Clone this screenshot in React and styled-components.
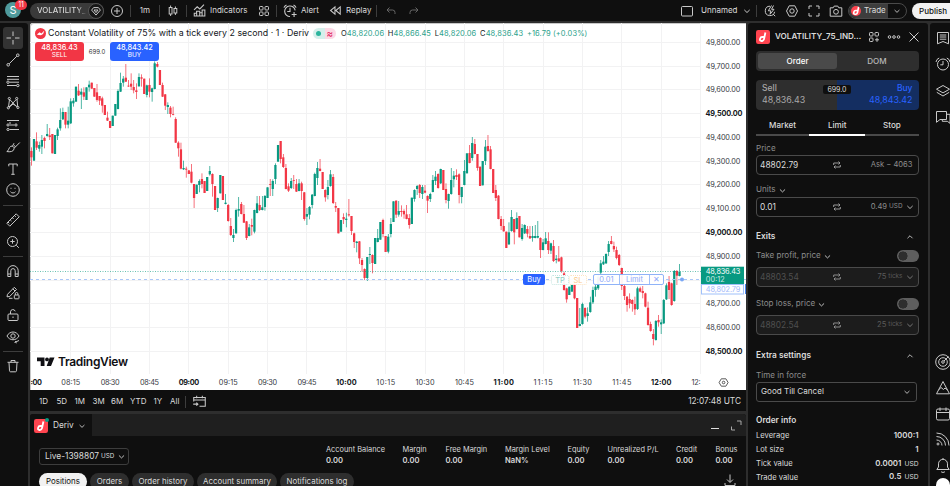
import React from 'react'
import styled, { createGlobalStyle } from 'styled-components'

/* bars are [open, close, high, low] in thirds of a pixel below `top` */
const series = [
  {
    top: 40,
    first: 0,
    bars: [
      [333, 352, 322, 377], [362, 297], [304, 323, 277, 330], [326, 315, 305, 335], [320, 300, 285, 342],
      [294, 303, 290, 325], [288, 282, 252, 290], [286, 291, 264, 300], [282, 340], [342, 285],
      [288, 268, 263, 300], [265, 240, 205, 272], [238, 216, 203, 240], [216, 254, 216, 265], [254, 242, 200, 265],
      [250, 184, 175, 252], [190, 182, 174, 200], [185, 140], [152, 166, 132, 168], [164, 155, 145, 207],
      [157, 170, 142, 180], [180, 142], [142, 134, 122, 155], [128, 146], [144, 170],
      [157, 180, 132, 185], [168, 182, 168, 195], [175, 197, 170, 218], [195, 225], [233, 242, 215, 243],
      [243, 264], [258, 227], [227, 192], [207, 153, 148, 208], [155, 129, 98, 156],
      [128, 116, 108, 140], [113, 125, 72, 126], [137, 139, 120, 141], [131, 140, 100, 150], [141, 151, 120, 160],
      [151, 156, 130, 177], [139, 111, 100, 140], [112, 116, 103, 140], [116, 162], [165, 136, 134, 172],
      [135, 155, 115, 172], [156, 145, 143, 185], [147, 70, 64, 148], [72, 80, 66, 82], [90, 135],
      [135, 170, 128, 171], [163, 197, 162, 210], [201, 195, 187, 222], [203, 222, 198, 232], [222, 224, 200, 226],
      [237, 308, 232, 309], [308, 325, 304, 350], [328, 386, 308, 388], [388, 384, 362, 390], [386, 389, 380, 413],
      [391, 402], [395, 428, 372, 430], [432, 474, 432, 504], [462, 434], [435, 423, 418, 457],
      [417, 432, 400, 445], [423, 459], [453, 411], [403, 393, 378, 407], [402, 432, 400, 470],
      [438, 510], [504, 474, 473, 516], [460, 405], [408, 480], [492, 488, 462, 493],
      [495, 543, 492, 545],
    ],
  },
  {
    top: 120,
    first: 76,
    bars: [
      [318, 345, 294, 348], [354, 345, 327, 366], [340, 270, 266, 341], [272, 267, 231, 290],
      [252, 282, 246, 283], [282, 308, 255, 309], [304, 354, 303, 360], [348, 322, 312, 349], [315, 320, 296, 346],
      [335, 270, 269, 340], [279, 250, 228, 280], [255, 270, 228, 273], [270, 262, 228, 271], [261, 228, 225, 272],
      [234, 202], [192, 194, 177, 228], [207, 183, 178, 228], [177, 135, 130, 192], [125, 75],
      [63, 117, 63, 130], [112, 141, 102, 144], [144, 207, 132, 208], [199, 212, 190, 216], [204, 183, 174, 207],
      [180, 182, 165, 207], [192, 215, 177, 216], [213, 190, 177, 214], [190, 213, 185, 240], [217, 297, 216, 302],
      [290, 282, 264, 315], [284, 261, 258, 298], [255, 224, 222, 265], [228, 162, 158, 229], [174, 144, 126, 195],
      [146, 153, 117, 154], [156, 207], [210, 232, 208, 245], [225, 201, 180, 238], [198, 163, 150, 200],
      [171, 249, 162, 252], [258, 263, 246, 276], [264, 340], [335, 300], [291, 298, 280, 312],
      [300, 296, 278, 322], [283, 286, 237, 290], [288, 333, 288, 345], [340, 366, 338, 384], [369, 365, 363, 397],
      [364, 415, 363, 432], [420, 435, 414, 455], [447, 474, 445, 480], [474, 411, 411, 483], [405, 402, 381, 432],
      [405, 429, 403, 460], [432, 354], [366, 354, 327, 367], [359, 306], [300, 342, 296, 352],
      [348, 396], [395, 350, 342, 400], [342, 312, 294, 352], [306, 244], [242, 284, 241, 294],
      [284, 273, 243, 290], [273, 276, 256, 290], [273, 283, 268, 296], [283, 297, 255, 298], [294, 315, 282, 326],
      [312, 233], [237, 210, 208, 245], [207, 198, 195, 225], [195, 219, 192, 234], [222, 201, 195, 237],
      [212, 218, 195, 220], [228, 242, 226, 279], [237, 222, 218, 246], [216, 180, 165, 217], [183, 170, 153, 195],
      [162, 204, 160, 206], [190, 147, 146, 192], [150, 210], [207, 240, 190, 250], [243, 222, 221, 266],
      [222, 180, 144, 224], [178, 167, 153, 202], [165, 171, 148, 180], [163, 225, 160, 250], [231, 201, 201, 250],
      [195, 153, 120, 196], [160, 100], [99, 129, 75, 130], [114, 69, 51, 122], [72, 102, 57, 103],
      [102, 144, 102, 152], [140, 198], [196, 123], [123, 80, 60, 135], [78, 93, 45, 95],
      [88, 147, 78, 148], [147, 219], [210, 234, 195, 243], [227, 297, 225, 298], [297, 318, 288, 330],
      [318, 334, 297, 335], [335, 384], [373, 337, 307, 375], [333, 291, 270, 335], [297, 337, 297, 373],
      [327, 294, 277, 328], [288, 352], [357, 324, 312, 362], [340, 315, 313, 342], [327, 341, 318, 352],
      [348, 355, 318, 357], [354, 348, 318, 365], [354, 348, 315, 355], [353, 348, 303, 355], [354, 390, 352, 414],
      [390, 367, 357, 391], [372, 355, 336, 373], [363, 390, 337, 402], [392, 370, 368, 402], [378, 423, 360, 426],
      [420, 416, 405, 430], [415, 424, 378, 425], [412, 453, 410, 458], [460, 510, 455, 512], [505, 538, 503, 548],
      [525, 500], [515, 492], [492, 535, 490, 538], [534, 624], [618, 612, 564, 619],
      [612, 552, 548, 614], [564, 590, 562, 595], [588, 580, 562, 605], [576, 547, 530, 578], [547, 510, 500, 552],
      [510, 500, 490, 530], [505, 470, 462, 510], [458, 430, 420, 462], [433, 425, 408, 435], [430, 402, 400, 432],
      [396, 372, 363, 408], [363, 372, 348, 373], [378, 388, 365, 396], [390, 414, 380, 418], [405, 435, 402, 438],
      [444, 498, 443, 510], [498, 528, 495, 540], [530, 555, 528, 575], [537, 550, 520, 565], [540, 552, 538, 575],
      [552, 568, 530, 585], [567, 505, 500, 570], [505, 515, 500, 517], [513, 519, 498, 535], [520, 560, 518, 562],
      [563, 615, 545, 617], [612, 633, 605, 635], [642, 657, 627, 676], [660, 603, 600, 662], [600, 607, 585, 620],
      [613, 607, 598, 642], [610, 540, 537, 612], [538, 496, 490, 540], [486, 510, 468, 537], [490, 555, 488, 557],
      [543, 453, 450, 545], [453, 467, 450, 495], [468, 456, 432, 469],
    ],
  },
]

const prices = Array.from({ length: 14 }, (_, i) => 49800 - i * 100)
const times = [
  '08:15', '08:30', '08:45', '09:00', '09:15', '09:30', '09:45', '10:00', '10:15',
  '10:30', '10:45', '11:00', '11:15', '11:30', '11:45', '12:00',
]
const isMajor = (t) => t.endsWith(':00')
const format = (n) => `${n.toLocaleString('en-US')}.00`

/* every icon sits on a 20 by 20 canvas */
const shapes = {
  plus: <><circle cx='10' cy='10' r='5.5' /><path d='M7 10h6M10 7v6' /></>,
  diamond: <><path d='M7.6 6.6h4.8l2 2.5-4.4 5-4.4-5z' /><path d='M8 9l2 2.6L12 9z' /></>,
  candles: <><path d='M7.6 4.5v2M7.6 13v2M12.4 5.5v2M12.4 12v2' /><rect x='6.2' y='6.5' width='2.8' height='6.5' /><rect x='11' y='7.5' width='2.8' height='4.5' /></>,
  indicators: <><path d='M5 15.3v-2.6h2.2v-2h3v1.4h2.3V9.500h2.600v5.800zM7.300 15v-3M10.200 15v-4M12.500 15v-3' /><path d='M4.800 9.500l3-3 2.500 2 4-4' /></>,
  grid: <><rect x='5.500' y='5.500' width='3.500' height='3.500' rx='.8' /><rect x='11' y='5.500' width='3.500' height='3.500' rx='.8' /><rect x='5.500' y='11' width='3.500' height='3.500' rx='.8' /><rect x='11' y='11' width='3.500' height='3.500' rx='.8' /></>,
  addGrid: <><rect x='5.500' y='5.500' width='3.500' height='3.500' rx='.8' /><rect x='11' y='5.500' width='3.500' height='3.500' rx='.8' /><rect x='5.500' y='11' width='3.500' height='3.500' rx='.8' /><path d='M11 12.800h4M13 10.800v4' /></>,
  alert: <><path d='M14.700 9.500A4.800 4.800 0 1 0 10 15M10 7v3.500h-2.500M4.500 7a4 4 0 0 1 2.300-2.500M15.500 7a4 4 0 0 0-2.300-2.500M11.500 13.200h4.500M13.700 11v4.500' /></>,
  replay: <path d='M9.500 6.500L5.300 10l4.200 3.500zM14.500 6.500L10.300 10l4.200 3.500z' />,
  undo: <path d='M8.500 6.500L6 9l2.500 2.500M6 9h5.500a2.500 2.500 0 0 1 2.500 2.500V13' />,
  redo: <path d='M11.500 6.500L14 9l-2.500 2.500M14 9H8.500A2.500 2.500 0 0 0 6 11.500V13' />,
  square: <rect x='4.500' y='5.500' width='11' height='9.500' rx='1' />,
  chevron: <path d='M7.300 8.900l2.700 2.600 2.700-2.600' />,
  up: <path d='M7.200 11.400L10 8.600l2.800 2.800' />,
  quick: <><path d='M13.200 13.200l2 2M10 5.200a4.700 4.700 0 1 0 4.600 5.600' /><path d='M11.500 4.500L8.300 9.800h2.500l-.8 3.500 4-5h-2.500l2-3.800' /></>,
  settings: <><path d='M7.200 4.800h5.600L15.500 10l-2.700 5.200H7.200L4.500 10z' /><circle cx='10' cy='10' r='2.200' /></>,
  full: <path d='M5 8V5h3M12 5h3v3M15 12v3h-3M8 15H5v-3' />,
  camera: <><path d='M4.200 6.800h3l1-1.700h3.600l1 1.700h3v8.400H4.200z' /><circle cx='10' cy='10.800' r='2.400' /></>,
  cross: <path d='M10 3.500V8M10 12v4.500M3.500 10H8M12 10h4.500' />,
  line: <><circle cx='5.200' cy='14.800' r='1.300' /><circle cx='14.800' cy='5.200' r='1.300' /><path d='M6.200 13.800l7.600-7.600' /></>,
  fib: <><path d='M4 5.500h12M4 8.300h12M6.500 11.200H16M4 14.500h9.500' /><circle cx='5' cy='11.200' r='1.200' /><circle cx='14.800' cy='14.500' r='1.200' /></>,
  pattern: <><path d='M5.500 14l1-7.500M6.700 6.500l6.600 6.700M6 14l7.300-7.500M14 6.500l.700 7M6 14.500l4-3.500 4.500 3' /><circle cx='6.300' cy='5.500' r='1.100' /><circle cx='13.700' cy='5.500' r='1.100' /><circle cx='5.300' cy='14.800' r='1.100' /><circle cx='14.900' cy='14.500' r='1.100' /></>,
  forecast: <><path d='M4 5.500h12M6.500 14.500H16M6.500 10h5M7 7v2' /><circle cx='5' cy='10' r='1.100' /><circle cx='13' cy='10' r='1.100' /><circle cx='5' cy='14.500' r='1.100' /></>,
  brush: <path d='M3.800 14.500c2-.3 1.700-4 4-5.200 1.800-.8 3.600.7 3.300 2.600-.5 2.800-4.300 3.300-7.300 2.600zM9.500 9.200l1.500-3M11.300 11l5.500-5.500M11 8.500l1.500 1' />,
  text: <path d='M5.800 7.300V5h8.400v2.300M10 5v10.300M8.300 15.300h3.400' />,
  smile: <><circle cx='10' cy='10' r='6.300' /><path d='M7.500 11.700c1 1.700 4 1.700 5 0M8 7.800v1M12 7.800v1' /></>,
  ruler: <path d='M3.800 13.200l9.400-9.400 3 3-9.400 9.400zM11.500 5.500l1.300 1.300M9.300 7.700l1.300 1.300M7.200 9.800l1.300 1.300M5 12l1.300 1.300' />,
  zoom: <><circle cx='9.500' cy='9.500' r='5' /><path d='M13.300 13.300l2.500 2.500M7.300 9.500h4.400M9.500 7.300v4.400' /></>,
  magnet: <path d='M4.800 15.500V9.800a5.200 5.200 0 0 1 10.400 0v5.700h-3V9.800a2.200 2.200 0 0 0-4.400 0v5.700zM4.800 13h3M12.200 13h3' />,
  pencilLock: <><path d='M4 13.800l.5-2.500 6.800-7 2.200 2.200-6.800 7zM9.800 5.800l2.200 2.200' /><rect x='11.300' y='12' width='4.700' height='3.800' rx='.6' /><path d='M12.300 12v-1.200a1.300 1.300 0 0 1 2.600 0V12M6 15.300h3.500' /></>,
  unlock: <><rect x='5' y='9' width='10' height='6.500' rx='1' /><path d='M7.500 9V6.800a2.400 2.400 0 0 1 4.700-.5M10 11.500v1.500' /></>,
  eye: <><path d='M4 9c2.700-5.300 9.300-5.300 12 0-2.700 5-9.300 5-12 0z' /><circle cx='10' cy='9' r='2.200' /><path d='M11.500 15.500l4.500-2M12.500 14l.8 2.300' /></>,
  trash: <path d='M4.500 6.300h11M8 6.300V4.500h4v1.800M6 6.500l.5 8.300c0 .5.500 1 1 1h5c.5 0 1-.5 1-1l.5-8.300' />,
  calendar: <><path d='M4.500 10V6.200h11v8.300H10M4.500 8.500h11M7.300 4.500V7M12.700 4.500V7M4 12.500h4.500M7 11l1.500 1.500L7 14' /></>,
  swap: <path d='M6.700 10V8h6M11.500 6.500L13 8l-1.500 1.500M13.300 10v2h-6M8.500 10.500L7 12l1.500 1.500' />,
  dots: <><circle cx='5.500' cy='10' r='1.300' /><circle cx='10' cy='10' r='1.300' /><circle cx='14.500' cy='10' r='1.300' /></>,
  close: <path d='M5.500 5.500l9 9M14.500 5.500l-9 9' />,
  minimize: <path d='M6 13.500h8' />,
  expand: <path d='M11 6h4v4M9 15H5.500v-3.500' />,
  download: <path d='M10 4.500v7.500M7 9.500l3 3 3-3M5 13v2.500h10V13' />,
  news: <path d='M4.500 4.500h11v11.300L10 13.500l-5.500 2.300zM6.800 7h6.500M6.800 9h6.500M6.800 11.200h6.500' />,
  clock: <><circle cx='10' cy='10.500' r='5.500' /><path d='M10 7v3.800H7.300M3 8a5 5 0 0 1 3.200-4M17 8a5 5 0 0 0-3.200-4' /></>,
  layers: <path d='M10 4.500l6.500 3.700-6.500 3.700-6.500-3.700zM3.800 11.300L10 15l6.200-3.700' />,
  chat: <path d='M3.500 4.500h10v8H7l-3.500 2.800zM14 7.300h3v9l-2.700-2H9.300v-1.800' />,
  radar: <><circle cx='10' cy='10' r='7.300' /><circle cx='10' cy='10' r='4.300' /><circle cx='10' cy='10' r='1.300' /><path d='M11 9l4.500-4.500' /></>,
  mountain: <path d='M3.500 15.800L10 3.500l6.500 12.300zM5.800 11.700L8 9.500l2.500 2 1.500-1.500 2.500 2' />,
  date: <><rect x='3.500' y='5' width='13' height='11' rx='1.500' /><path d='M3.500 8.500h13M7 3.500V7M13 3.500V7' /></>,
  feed: <><path d='M3.500 4a12.500 12.500 0 0 1 12.500 12.500M3.500 7.500a9 9 0 0 1 9 9M3.500 11a5.500 5.500 0 0 1 5.500 5.500' /><circle cx='5' cy='15' r='1' /></>,
  bell: <path d='M3.800 14.500h12.400l-1.700-2.500V8.800a4.500 4.500 0 0 0-9 0V12zM8 16.500c.7 1.200 3.300 1.200 4 0M10 3v1.300' />,
}

const Icon = ({ name, size = 20, color = '#c9c9c9' }) => (
  <Glyph viewBox='0 0 20 20' width={size} height={size} $color={color}>
    {shapes[name]}
  </Glyph>
)

const DerivLogo = ({ size }) => (
  <Logo viewBox='0 0 14 14' width={size} height={size}>
    <rect width='14' height='14' rx='2.200' fill='#ff444f' />
    <path d='M9.400 2.500L8 9.200a2.200 2.200 0 0 1-2.100 1.800h-.6c-1 0-1.500-.7-1.300-1.600l.2-.9A2 2 0 0 1 6.200 7h1.900' fill='none' stroke='#fff' strokeWidth='1.800' />
  </Logo>
)

const Chart = () => (
  <ChartCanvas viewBox='30 23 716 367' width='716' height='367'>
    <g fill='#f2f2f3'>
      {prices.map((p, i) => (
        <rect key={p} x='30' y={Math.round(41.800 + i * 23.770)} width='671' height='1' />
      ))}
      {Array.from({ length: 17 }, (_, i) => (
        <rect key={i} x={Math.round(70.300 + i * 39.360)} y='23' width='1' height='351' />
      ))}
    </g>
    {series.map(({ top, first, bars }) =>
      bars.map(([open, close, high = Math.min(open, close), low = Math.max(open, close)], i) => {
        const x = 31.400 + (first + i) * 2.624
        const up = close < open
        const color = up ? '#089981' : '#f23645'
        return (
          <g key={first + i} fill={color}>
            <rect x={x - 0.35} y={top + high / 3} width='0.700' height={(low - high) / 3} />
            <rect
              x={x - 1.15}
              y={top + Math.min(open, close) / 3}
              width='2.250'
              height={Math.max(Math.abs(open - close) / 3, 0.8)}
            />
          </g>
        )
      })
    )}
    <path d='M30 271.500h671' stroke='#089981' strokeOpacity='.6' strokeDasharray='1 1.500' />
    <path d='M30 279.500h716' stroke='#a9c6f7' strokeDasharray='3 3' />
    <circle cx='682' cy='279.500' r='2' fill='#7aa7f5' />
    {prices.map((p, i) => {
      const major = p % 500 === 0
      return p === 48800 ? null : (
        <AxisText key={p} x={major ? 705.500 : 705.800} y={44.800 + i * 23.770} textLength={major ? 37 : 34.500} $major={major}>
          {format(p)}
        </AxisText>
      )
    })}
    <AxisText x='30.500' y='385' textLength='11.500' $major>:00</AxisText>
    {times.map((t, i) => (
      <AxisText key={t} x={70.800 + i * 39.360} y='385' textLength={isMajor(t) ? 20.500 : 19} textAnchor='middle' $major={isMajor(t)}>
        {t}
      </AxisText>
    ))}
    <AxisText x='691.500' y='385' textLength='9'>12:</AxisText>
    <g fill='none' stroke='#333' strokeWidth='.8'>
      <path d='M721.300 378.800h4.600l2.200 3.700-2.200 3.700h-4.600l-2.200-3.700z' />
      <circle cx='723.600' cy='382.500' r='1.300' />
    </g>
    <rect x='701' y='266.700' width='43' height='17.300' fill='#089981' />
    <AxisText x='705.800' y='274' textLength='34.500' $color='#fff'>48,836.43</AxisText>
    <AxisText x='705.800' y='282.300' textLength='19' $color='#c9e9e3'>00:12</AxisText>
    <rect x='701.500' y='284.500' width='42' height='9.500' fill='#fff' stroke='#9fc0fa' />
    <rect x='745' y='284' width='1' height='10' fill='#4b86ee' />
    <AxisText x='705.800' y='292.200' textLength='34.500' $color='#9fb8fa'>48,802.79</AxisText>
    <g fill='#101014'>
      <path d='M37 357.500h7.500v8.500h-3.800v-4.700H37zM49.700 357.500h4.800L51 366h-4.300z' />
      <circle cx='47' cy='359.400' r='1.900' />
      <Wordmark x='58' y='366.300' textLength='70'>TradingView</Wordmark>
    </g>
  </ChartCanvas>
)

const ranges = [['1D', 17.5], ['5D', 18], ['1M', 18], ['3M', 18.500], ['6M', 19], ['YTD', 23.500], ['1Y', 16.500], ['All', 15]]
const leftTools = ['line', 'fib', 'pattern', 'forecast', 'brush', 'text', 'smile']
const balances = [
  ['Account Balance', '0.00', 76.500], ['Margin', '0.00', 43], ['Free Margin', '0.00', 59.500], ['Margin Level', 'NaN%', 62.500],
  ['Equity', '0.00', 40], ['Unrealized P/L', '0.00', 68.500], ['Credit', '0.00', 39.500], ['Bonus', '0.00', 30],
]
const orderInfo = [['Leverage', '1000:1'], ['Lot size', '1'], ['Tick value', '0.0001', 'USD'], ['Trade value', '0.5', 'USD']]

const TopBar = () => (
  <TopWrapper>
    <Slot $w={30}>
      <Avatar>
        S<Badge>11</Badge>
      </Avatar>
    </Slot>
    <SymbolPill>
      <span>VOLATILITY_</span>
      <SymbolEnd><Icon name='diamond' /></SymbolEnd>
    </SymbolPill>
    <Slot $w={26}><Icon name='plus' /></Slot>
    <Divider />
    <Slot $w={28}>1m</Slot>
    <Divider />
    <Slot $w={26}><Icon name='candles' /></Slot>
    <Divider />
    <Slot $w={64} $start><Icon name='indicators' size={21} />Indicators</Slot>
    <Slot $w={25}><Icon name='grid' /></Slot>
    <Divider />
    <Slot $w={46} $start><Icon name='alert' size={22} />Alert</Slot>
    <Slot $w={53} $start><Icon name='replay' size={21} />Replay</Slot>
    <Divider />
    <Slot $w={28}><Icon name='undo' color='#666' /></Slot>
    <Slot $w={18}><Icon name='redo' color='#666' /></Slot>
    <Spacer />
    <Slot $w={24}><Icon name='square' /></Slot>
    <Slot $w={39} $text>Unnamed</Slot>
    <Slot $w={18}><Icon name='chevron' /></Slot>
    <Divider />
    <Slot $w={26}><Icon name='quick' /></Slot>
    <Slot $w={18}><Icon name='settings' /></Slot>
    <Slot $w={26}><Icon name='full' size={20} /></Slot>
    <Slot $w={17}><Icon name='camera' /></Slot>
    <TradePill>
      <TradeMain>
        <RoundLogo><DerivLogo size={13} /></RoundLogo>
        Trade
      </TradeMain>
      <Icon name='chevron' size={18} />
    </TradePill>
    <Publish>Publish</Publish>
  </TopWrapper>
)

const Field = ({ value, hint, unit, chevron, dim }) => (
  <Input $dim={dim}>
    <b>{value}</b>
    <Icon name='swap' color={dim ? '#8c8c8c' : '#9a9a9a'} />
    <Hint $chevron={chevron} $dim={dim}>
      {hint}{unit && <small>{unit}</small>}
      {chevron && <Icon name='chevron' color={dim ? '#777' : '#b0b0b0'} />}
    </Hint>
  </Input>
)

const OrderPanel = () => (
  <Panel>
    <PanelHead>
      <DerivLogo size={14} />
      <h2>VOLATILITY_75_IND…</h2>
      <Icon name='addGrid' />
      <Icon name='dots' />
      <Icon name='close' />
    </PanelHead>
    <Segments>
      <Segment $active>Order</Segment>
      <Segment>DOM</Segment>
    </Segments>
    <Quotes>
      <Quote>Sell<b>48,836.43</b></Quote>
      <Quote $buy>Buy<b>48,843.42</b></Quote>
      <Spread>699.0</Spread>
    </Quotes>
    <OrderTypes>
      <OrderType $w={53}>Market</OrderType>
      <OrderType $w={56} $active>Limit</OrderType>
      <OrderType $w={53}>Stop</OrderType>
    </OrderTypes>
    <Label $h={19} $pt={6}>Price</Label>
    <Field value='48802.79' hint='Ask − 4063' />
    <Label $h={22} $pt={8}>Units<Icon name='chevron' size={19} /></Label>
    <Field value='0.01' hint='0.49' unit='USD' chevron />
    <Heading $h={30} $pt={10}>Exits<Icon name='up' size={18} /></Heading>
    <Label $h={20} $pb={2}>Take profit, price<Icon name='chevron' size={19} /><Switch /></Label>
    <Field value='48803.54' hint='75' unit='ticks' chevron dim />
    <Label $h={28} $pt={8} $pb={2}>Stop loss, price<Icon name='chevron' size={19} /><Switch /></Label>
    <Field value='48802.54' hint='25' unit='ticks' chevron dim />
    <Heading $h={31} $pt={11}>Extra settings<Icon name='up' size={18} /></Heading>
    <Label $h={16} $pt={3}>Time in force</Label>
    <Select>Good Till Cancel<Icon name='chevron' size={18} /></Select>
    <Heading $h={27} $pt={11}>Order info</Heading>
    {orderInfo.map(([name, value, unit]) => (
      <InfoRow key={name}>
        {name}
        <b>{value}{unit && <small>{unit}</small>}</b>
      </InfoRow>
    ))}
  </Panel>
)

const App = () => (
  <>
    <GlobalStyle />
    <Page>
      <TopBar />
      <Body>
        <LeftBar>
          <Tool $active><Icon name='cross' /></Tool>
          {leftTools.map((name) => <Tool key={name}><Icon name={name} /></Tool>)}
          <Rule />
          <Tool><Icon name='ruler' /></Tool>
          <Tool><Icon name='zoom' /></Tool>
          <Rule />
          {['magnet', 'pencilLock', 'unlock', 'eye'].map((name) => <Tool key={name}><Icon name={name} /></Tool>)}
          <Rule />
          <Tool><Icon name='trash' /></Tool>
        </LeftBar>
        <Center>
          <ChartArea>
            <Chart />
            <Legend>
              <LegendLogo viewBox='0 0 12 12' width='11' height='11'>
                <circle cx='6' cy='6' r='6' fill='#f23645' />
                <path d='M2 7l3-2.500L7 6l3.300-3.200L8.800 6.500 6.500 8 4 7.500z' fill='#fff' />
              </LegendLogo>
              <Title>Constant Volatility of 75% with a tick every 2 second · 1 · Deriv</Title>
              <Status><i />≈</Status>
              <Ohlc>
                <span>O<b>48,820.06</b></span>
                <span>H<b>48,866.45</b></span>
                <span>L<b>48,820.06</b></span>
                <span>C<b>48,836.43</b></span>
                <b>+16.79 (+0.03%)</b>
              </Ohlc>
            </Legend>
            <QuickTrade>
              <QuickButton>48,836.43<span>SELL</span></QuickButton>
              <em>699.0</em>
              <QuickButton $buy>48,843.42<span>BUY</span></QuickButton>
            </QuickTrade>
            <OrderLine>
              <BuyTag>Buy</BuyTag>
              <StopTag>TP</StopTag>
              <StopTag $orange>SL</StopTag>
              <LimitTag>
                <span>0.01</span>
                <span>Limit</span>
                <span>✕</span>
              </LimitTag>
            </OrderLine>
          </ChartArea>
          <RangeBar>
            {ranges.map(([name, w]) => <Range key={name} $w={w}>{name}</Range>)}
            <Divider />
            <Slot $w={26}><Icon name='calendar' size={21} /></Slot>
            <Clock>12:07:48 UTC</Clock>
          </RangeBar>
          <Bottom>
            <BottomHead>
              <BrokerTab>
                <BrokerLogo><DerivLogo size={14} /></BrokerLogo>
                Deriv
                <Icon name='chevron' size={18} />
              </BrokerTab>
              <Spacer />
              <Slot $w={21}><Icon name='minimize' color='#ddd' /></Slot>
              <Slot $w={21}><Icon name='expand' color='#aaa' /></Slot>
            </BottomHead>
            <Summary>
              <Account>Live-1398807 <small>USD</small><Icon name='chevron' size={19} /></Account>
              {balances.map(([name, value, w]) => (
                <Balance key={name} $w={w}>{name}<b>{value}</b></Balance>
              ))}
            </Summary>
            <Pills>
              <Pill $w={48} $active>Positions</Pill>
              <Pill $w={39}>Orders</Pill>
              <Pill $w={62}>Order history</Pill>
              <Pill $w={80}>Account summary</Pill>
              <Pill $w={74}>Notifications log</Pill>
              <Spacer />
              <DownloadSlot $w={33}><Icon name='download' /></DownloadSlot>
            </Pills>
          </Bottom>
        </Center>
        <OrderPanel />
        <RightBar>
          {['news', 'clock', 'layers', 'chat'].map((name) => <SideTool key={name} $h={26.500}><Icon name={name} /></SideTool>)}
          <Spacer />
          {['radar', 'mountain', 'date', 'feed', 'bell'].map((name) => <SideTool key={name} $h={25.700}><Icon name={name} /></SideTool>)}
          <Help />
        </RightBar>
      </Body>
    </Page>
  </>
)

const GlobalStyle = createGlobalStyle`
  * {
    box-sizing: border-box;
  }
  body {
    margin: 0;
    overflow: hidden;
    background: #2e2e2e;
    color: #dbdbdb;
    font-family: Inter, "Liberation Sans", sans-serif;
    font-size: 8.3px;
    line-height: 1.2;
  }
`
const Glyph = styled.svg`
  flex: none;
  fill: none;
  stroke: ${({ $color }) => $color};
  stroke-width: 1;
`
const Logo = styled.svg`
  flex: none;
`
const Page = styled.div`
  display: flex;
  flex-direction: column;
  gap: 2px;
  width: 950px;
  height: 486px;
  overflow: hidden;
`
const Spacer = styled.div`
  flex: 1;
`
const TopWrapper = styled.header`
  display: flex;
  align-items: center;
  height: 21px;
  flex: none;
  background: #0f0f0f;
  font-size: 8px;
`
const Slot = styled.div`
  display: flex;
  flex: none;
  align-items: center;
  justify-content: ${({ $start, $text }) => ($start || $text ? 'flex-start' : 'center')};
  width: ${({ $w }) => $w}px;
  padding-left: ${({ $start, $text }) => ($start || $text ? 2 : 0)}px;
  white-space: nowrap;
`
const DownloadSlot = styled(Slot)`
  margin-top: -4px;
`
const Divider = styled.div`
  flex: none;
  width: 1px;
  height: 12px;
  background: #3d3d3d;
`
const Avatar = styled.div`
  position: relative;
  width: 16px;
  height: 16px;
  margin: -1px 4px 0 0;
  border-radius: 50%;
  background: #4f9a9c;
  color: #fff;
  font-size: 11px;
  line-height: 16px;
  text-align: center;
`
const Badge = styled.span`
  position: absolute;
  left: 10px;
  top: -2px;
  width: 12px;
  height: 10px;
  border-radius: 5px;
  background: #f23645;
  font-size: 7px;
  line-height: 10px;
`
const SymbolPill = styled.div`
  display: flex;
  align-items: center;
  justify-content: space-between;
  flex: none;
  width: 74px;
  height: 16px;
  padding-left: 7px;
  border-radius: 8px;
  background: #3a3a3a;
  font-size: 7.8px;
  font-weight: 500;
  span {
    width: 50px;
    background: linear-gradient(90deg, #e0e0e0 80%, #3a3a3a);
    background-clip: text;
    color: transparent;
  }
`
const SymbolEnd = styled.div`
  display: flex;
  align-items: center;
  justify-content: center;
  flex: none;
  width: 16px;
  height: 16px;
  border: 1px solid #555;
  border-radius: 8px;
  background: #171717;
`
const TradePill = styled.div`
  display: flex;
  align-items: center;
  flex: none;
  width: 59px;
  height: 16px;
  margin-left: 4px;
  overflow: hidden;
  border: 1px solid #4a4a4a;
  border-radius: 8px;
`
const TradeMain = styled.div`
  display: flex;
  align-items: center;
  width: 41px;
  height: 16px;
  padding-left: 2px;
  gap: 3px;
  background: #3d3d3d;
`
const RoundLogo = styled.div`
  display: flex;
  align-items: center;
  justify-content: center;
  flex: none;
  width: 10px;
  height: 10px;
  overflow: hidden;
  border-radius: 50%;
`
const Publish = styled.button`
  flex: none;
  width: 48px;
  height: 16px;
  margin: 0 -10px 0 5px;
  padding: 0 0 0 7px;
  border: 0;
  border-radius: 8px;
  background: #f2f2f2;
  color: #0f0f0f;
  font: 500 8px Inter, sans-serif;
  text-align: left;
`
const Body = styled.div`
  display: flex;
  flex: 1;
  gap: 2px;
  min-height: 0;
`
const LeftBar = styled.nav`
  display: flex;
  flex-direction: column;
  align-items: center;
  flex: none;
  width: 28px;
  padding: 4px 2px 0 0;
  border-radius: 0 3px 0 0;
  background: #0f0f0f;
`
const Tool = styled.div`
  display: flex;
  flex: none;
  align-items: center;
  justify-content: center;
  width: 20px;
  height: 21.8px;
  border-radius: 3px;
  background: ${({ $active }) => ($active ? '#333' : 'none')};
  background-clip: content-box;
`
const Rule = styled.div`
  flex: none;
  width: 20px;
  height: 1px;
  margin: 3.4px 0;
  background: #3d3d3d;
`
const Center = styled.main`
  display: flex;
  flex: none;
  flex-direction: column;
  width: 716px;
`
const ChartArea = styled.section`
  position: relative;
  flex: none;
  height: 367px;
  overflow: hidden;
  border-radius: 3px 0 0 0;
  background: #fff;
  box-shadow: inset 1px 1px #c8c8c8;
`
const ChartCanvas = styled.svg`
  display: block;
`
const AxisText = styled.text`
  fill: ${({ $color, $major }) => $color || ($major ? '#131722' : '#363942')};
  font-size: 7.3px;
  font-weight: ${({ $major }) => ($major ? 700 : 400)};
`
const Wordmark = styled.text`
  font-size: 12px;
  font-weight: 600;
`
const Legend = styled.div`
  position: absolute;
  left: 5px;
  top: 3px;
  display: flex;
  align-items: center;
  height: 14px;
  white-space: nowrap;
  color: #131722;
`
const LegendLogo = styled(Logo)`
  margin-right: 2px;
`
const Title = styled.span`
  width: 265px;
  font-size: 8.8px;
  letter-spacing: .025px;
`
const Status = styled.span`
  display: flex;
  align-items: center;
  justify-content: space-around;
  width: 23px;
  height: 11px;
  margin-right: 5px;
  border-radius: 6px;
  background: linear-gradient(90deg, #d5efeb 50%, #fcd9e5 50%);
  color: #e0245e;
  font-size: 10px;
  line-height: 10px;
  i {
    width: 5px;
    height: 5px;
    border-radius: 50%;
    background: #2bb49d;
  }
`
const Ohlc = styled.span`
  display: flex;
  gap: 3.7px;
  font-size: 7.5px;
  letter-spacing: .1px;
  b {
    color: #2a9f8b;
    font-weight: 400;
  }
`
const QuickTrade = styled.div`
  position: absolute;
  left: 5px;
  top: 19px;
  display: flex;
  align-items: center;
  em {
    width: 26px;
    color: #333;
    font-size: 6px;
    font-style: normal;
    text-align: center;
  }
`
const QuickButton = styled.div`
  width: 49px;
  height: 19px;
  padding-top: 2px;
  border-radius: 3px;
  background: ${({ $buy }) => ($buy ? '#2962ff' : '#f23645')};
  color: #fff;
  font-size: 7.3px;
  font-weight: 500;
  line-height: 8px;
  text-align: center;
  span {
    display: block;
    font-size: 6.5px;
    font-weight: 400;
    line-height: 7px;
  }
`
const OrderLine = styled.div`
  position: absolute;
  left: 493px;
  top: 251px;
  display: flex;
  align-items: center;
  height: 11px;
  font-size: 7.5px;
`
const BuyTag = styled.span`
  width: 22px;
  margin-right: 6px;
  border-radius: 2px;
  background: #2962ff;
  color: #fff;
  line-height: 11px;
  text-align: center;
`
const StopTag = styled.span`
  width: 18px;
  height: 10px;
  border: 1px dotted ${({ $orange }) => ($orange ? '#fde3c0' : '#c4e6e0')};
  border-radius: 2px;
  background: rgba(255, 255, 255, .95);
  color: ${({ $orange }) => ($orange ? '#fbc988' : '#8fcfc4')};
  line-height: 9px;
  text-align: center;
`
const LimitTag = styled.span`
  display: flex;
  width: 71px;
  margin-left: 6px;
  border: 1px solid #8fb3f8;
  border-radius: 2px;
  background: rgba(255, 255, 255, .95);
  color: #8fa9f8;
  line-height: 9px;
  text-align: center;
  span {
    width: 14px;
    border-left: 1px solid #9fc0fa;
  }
  span:first-child {
    width: 25px;
    border: 0;
  }
  span:nth-child(2) {
    width: 31px;
  }
`
const RangeBar = styled.div`
  display: flex;
  align-items: center;
  flex: none;
  height: 21px;
  padding: 2px 5px 0 9px;
  background: #0f0f0f;
  font-size: 8px;
`
const Range = styled.span`
  width: ${({ $w }) => $w}px;
`
const Clock = styled.span`
  margin-left: auto;
  font-size: 8.3px;
`
const Bottom = styled.section`
  flex: 1;
  margin-top: 3px;
  overflow: hidden;
  border-radius: 3px 3px 0 0;
  background: #0f0f0f;
`
const BottomHead = styled.div`
  display: flex;
  align-items: center;
  height: 22px;
  background: #1f1f1f;
`
const BrokerTab = styled.div`
  display: flex;
  align-items: center;
  width: 62px;
  height: 22px;
  padding: 1px 0 0 5px;
  background: #0f0f0f;
  svg:last-child {
    margin-left: -1px;
  }
`
const BrokerLogo = styled.span`
  position: relative;
  display: flex;
  margin-right: 5px;
  &::after {
    content: '';
    position: absolute;
    right: -1px;
    top: -1px;
    width: 4px;
    height: 4px;
    border-radius: 50%;
    background: #089981;
  }
`
const Summary = styled.div`
  display: flex;
  align-items: center;
  height: 37px;
  padding: 4px 0 0 9px;
`
const Account = styled.div`
  display: flex;
  align-items: center;
  flex: none;
  width: 90px;
  height: 17px;
  margin-right: 197px;
  padding-left: 5px;
  border: 1px solid #3d3d3d;
  border-radius: 3px;
  font-size: 8.4px;
  white-space: nowrap;
  small {
    margin: 0 -2px 0 2px;
    font-size: 6.3px;
  }
`
const Balance = styled.div`
  flex: none;
  width: ${({ $w }) => $w}px;
  margin-top: -2px;
  font-size: 7.4px;
  line-height: 10.5px;
  white-space: nowrap;
  b {
    display: block;
    font-size: 7.6px;
    font-weight: 600;
  }
`
const Pills = styled.div`
  display: flex;
  gap: 3px;
  padding-left: 9px;
`
const Pill = styled.div`
  flex: none;
  width: ${({ $w }) => $w}px;
  height: 17px;
  border-radius: 9px;
  background: ${({ $active }) => ($active ? '#f2f2f2' : '#2e2e2e')};
  color: ${({ $active }) => ($active ? '#0f0f0f' : '#dbdbdb')};
  font-size: 7.9px;
  line-height: 17px;
  text-align: center;
  white-space: nowrap;
`
const Panel = styled.aside`
  flex: none;
  width: 179.5px;
  padding: 0 9px 0 8px;
  border-radius: 3px 3px 0 0;
  background: #0f0f0f;
`
const PanelHead = styled.div`
  display: flex;
  align-items: center;
  height: 28px;
  margin-right: -5px;
  h2 {
    width: 95px;
    margin: 0 0 0 5px;
    font-size: 8.1px;
    font-weight: 600;
    white-space: nowrap;
  }
`
const Segments = styled.div`
  display: flex;
  height: 20px;
  margin-bottom: 9px;
  padding: 2px;
  border-radius: 4px;
  background: #2e2e2e;
`
const Segment = styled.div`
  flex: 1;
  border-radius: 3px;
  background: ${({ $active }) => ($active ? '#4a4a4a' : 'none')};
  color: ${({ $active }) => ($active ? '#fff' : '#b8b8b8')};
  font-size: 8.1px;
  font-weight: 500;
  line-height: 16px;
  text-align: center;
`
const Quotes = styled.div`
  position: relative;
  display: flex;
  height: 30px;
  overflow: hidden;
  border-radius: 4px;
`
const Quote = styled.div`
  flex: 1;
  padding: 2px 6px;
  background: ${({ $buy }) => ($buy ? '#142e61' : '#2e2e2e')};
  color: ${({ $buy }) => ($buy ? '#2962ff' : '#a8a8a8')};
  font-size: 8.5px;
  font-weight: 500;
  line-height: 12px;
  text-align: ${({ $buy }) => ($buy ? 'right' : 'left')};
  b {
    display: block;
    font-size: 8.9px;
    font-weight: 400;
  }
`
const Spread = styled.span`
  position: absolute;
  left: 67px;
  top: 5px;
  width: 28px;
  border-radius: 2px;
  background: #0f0f0f;
  font-size: 7px;
  line-height: 9px;
  text-align: center;
`
const OrderTypes = styled.div`
  display: flex;
  height: 26px;
`
const OrderType = styled.div`
  width: ${({ $w }) => $w}px;
  flex: 1 0 auto;
  padding-top: 7px;
  border-bottom: 2px solid ${({ $active }) => ($active ? '#fff' : '#4a4a4a')};
  font-weight: 500;
  font-size: 8.1px;
  line-height: 16px;
  text-align: center;
`
const Label = styled.div`
  display: flex;
  align-items: center;
  height: ${({ $h }) => $h}px;
  padding: ${({ $pt = 0 }) => $pt}px 0 ${({ $pb = 0 }) => $pb}px;
  color: #8c8c8c;
  font-size: 8.1px;
  svg {
    margin-left: -3px;
  }
`
const Switch = styled.span`
  width: 22px;
  height: 12px;
  margin-left: auto;
  border-radius: 6px;
  background: radial-gradient(circle at 6px 6px, #2e2e2e 4.3px, #5e5e5e 4.8px);
`
const Input = styled.div`
  display: flex;
  align-items: center;
  height: 20px;
  padding: 0 5px 0 3px;
  border: 1px solid #4a4a4a;
  border-radius: 4px;
  background: ${({ $dim }) => ($dim ? '#1c1c1c' : 'none')};
  b {
    width: 67px;
    color: ${({ $dim }) => ($dim ? '#4f4f4f' : '#dbdbdb')};
    font-size: 8.4px;
    font-weight: 400;
  }
`
const Hint = styled.span`
  display: flex;
  align-items: center;
  margin-left: auto;
  margin-right: ${({ $chevron }) => ($chevron ? -7 : 0)}px;
  color: ${({ $dim }) => ($dim ? '#5a5a5a' : '#8c8c8c')};
  font-size: 7.6px;
  small {
    margin-left: 2px;
    font-size: 6.4px;
  }
  svg {
    margin-left: -3px;
  }
`
const Heading = styled.div`
  display: flex;
  align-items: center;
  justify-content: space-between;
  height: ${({ $h }) => $h}px;
  padding-top: ${({ $pt }) => $pt}px;
  font-size: 8.3px;
  font-weight: 600;
`
const Select = styled.div`
  display: flex;
  align-items: center;
  justify-content: space-between;
  width: 161px;
  height: 20px;
  padding: 0 0 0 4px;
  border: 1px solid #4a4a4a;
  border-radius: 3px;
  font-size: 8.1px;
`
const InfoRow = styled.div`
  display: flex;
  align-items: center;
  justify-content: space-between;
  height: 13.75px;
  font-size: 7.6px;
  b {
    font-size: 7.9px;
    font-weight: 600;
  }
  small {
    margin-left: 3px;
    font-size: 6.7px;
    font-weight: 400;
  }
`
const RightBar = styled.nav`
  display: flex;
  flex-direction: column;
  align-items: center;
  flex: none;
  width: 26px;
  padding-top: 1.5px;
  border-radius: 3px 0 0 0;
  background: #0f0f0f;
`
const SideTool = styled.div`
  display: flex;
  align-items: center;
  flex: none;
  height: ${({ $h }) => $h}px;
`
const Help = styled.div`
  flex: none;
  width: 14px;
  height: 8px;
  border-radius: 7px 7px 0 0;
  background: #fff;
`

export default App
